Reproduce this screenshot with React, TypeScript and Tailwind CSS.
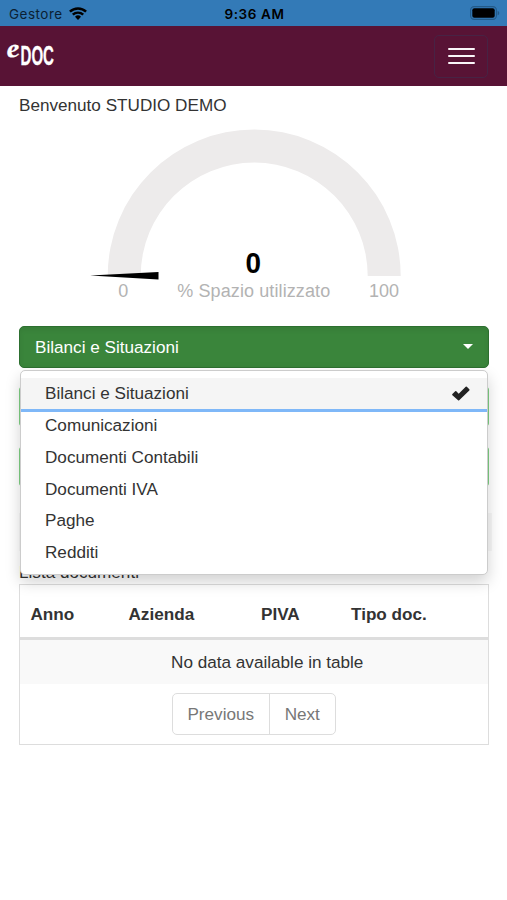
import { useState } from "react";

const categories = [
  "Bilanci e Situazioni",
  "Comunicazioni",
  "Documenti Contabili",
  "Documenti IVA",
  "Paghe",
  "Redditi",
];

function StatusBar() {
  return (
    <div className="grid h-[26px] grid-cols-3 items-center bg-[#337ab7] pt-[2px] pr-[7px] pl-[9px] font-[Inter,sans-serif] text-[13.5px] leading-6 text-[#0b1f33]">
      <div className="flex items-center gap-[6px]">
        <span className="tracking-[0.5px]">Gestore</span>
        <svg width="18" height="13" viewBox="0 0 18 13" fill="none" stroke="#000" className="-mt-[2px]">
          <path d="M.9 4.6a11.8 11.8 0 0 1 16.2 0" strokeWidth="2.5" />
          <path d="M3.8 7.7a7.5 7.5 0 0 1 10.4 0" strokeWidth="2.4" />
          <path d="M6 9.8a4.3 4.3 0 0 1 6 0L9 12.9z" fill="#000" stroke="none" />
        </svg>
      </div>
      <div className="text-center font-semibold tracking-[0.6px] text-black">9:36 AM</div>
      <div className="flex justify-end">
        <svg width="30" height="14" viewBox="0 0 30 14" className="-mt-[2px]">
          <rect x=".6" y=".6" width="25.8" height="12.8" rx="3.6" fill="none" stroke="#235a88" strokeWidth="1.1" />
          <rect x="2.3" y="2.3" width="22.4" height="9.4" rx="2" fill="#000" />
          <path d="M27.6 4.7c2.2.8 2.2 3.8 0 4.6z" fill="#235a88" />
        </svg>
      </div>
    </div>
  );
}

function Navbar() {
  return (
    <nav className="flex h-[60px] items-center justify-between bg-[#581335] pr-[19px]">
      <svg width="80" height="60" viewBox="0 0 80 60" fill="#fff" stroke="#fff">
        <text x="7.5" y="32" transform="rotate(-10 7.5 32)" fontFamily="Liberation Serif, serif" fontStyle="italic" fontWeight="700" fontSize="25" strokeWidth=".2" textLength="13.5" lengthAdjust="spacingAndGlyphs">
          e
        </text>
        <text x="20.5" y="38.5" fontFamily="Liberation Sans Narrow, Liberation Sans, sans-serif" fontWeight="700" fontSize="27" strokeWidth=".3" textLength="33.5" lengthAdjust="spacingAndGlyphs">
          DOC
        </text>
      </svg>
      <button type="button" className="flex h-[43px] w-[54px] flex-col items-center justify-center gap-[4.5px] rounded-[5px] border border-[#472344]">
        <span className="h-[2.6px] w-[27px] rounded-[1px] bg-[#fbf6f9]" />
        <span className="h-[2.6px] w-[27px] rounded-[1px] bg-[#fbf6f9]" />
        <span className="h-[2.6px] w-[27px] rounded-[1px] bg-[#fbf6f9]" />
      </button>
    </nav>
  );
}

function Gauge() {
  return (
    <svg width="469" height="190" viewBox="19 120 469 190" fontFamily="Liberation Sans, Arial, sans-serif" className="block">
      <path d="M107.7 276a146.5 146.5 0 0 1 293 0h-33a113.5 113.5 0 0 0-227 0z" fill="#edebeb" />
      <path d="M90 275.4 158.5 272v7.4z" fill="#000" />
      <text x="253.3" y="273" textAnchor="middle" fontSize="30" fontWeight="700" textLength="15.5" lengthAdjust="spacingAndGlyphs">
        0
      </text>
      <g fill="#b3b3b3" fontSize="18" textAnchor="middle">
        <text x="123.3" y="297">0</text>
        <text x="253.7" y="297" textLength="153">% Spazio utilizzato</text>
        <text x="384" y="297">100</text>
      </g>
    </svg>
  );
}

export default function App() {
  const [selected, setSelected] = useState(categories[0]);

  return (
    <div className="min-h-[900px] w-[507px] bg-white font-['Liberation_Sans',Arial,sans-serif] text-[17.14px] leading-[24px] text-[#333]">
      <StatusBar />
      <Navbar />
      <main className="px-[19px]">
        <p className="h-[34px] pt-[7px]">Benvenuto STUDIO DEMO</p>
        <Gauge />

        <div className="relative mt-[16px]">
          <button
            type="button"
            className="flex h-[41.5px] w-[469.5px] items-center justify-between rounded-[5px] border border-[#2d6f30] bg-[#3a853b] px-[15px] text-white shadow-[inset_0_3px_5px_rgba(0,0,0,0.06)]"
          >
            <span>{selected}</span>
            <svg width="10" height="5" viewBox="0 0 10 5">
              <path d="M0 0h10L5 5z" fill="#fff" />
            </svg>
          </button>

          <ul className="absolute top-[44px] left-px z-10 w-[468px] rounded-[5px] border border-[#ccc] bg-white pt-[6.5px] pb-[5.5px] shadow-[0_7px_15px_rgba(0,0,0,0.18)]">
            {categories.map((name) => (
              <li
                key={name}
                onClick={() => setSelected(name)}
                className={
                  name === selected
                    ? "flex h-[31.75px] items-center justify-between bg-[#f5f5f5] pr-[17px] pl-[24px] shadow-[0_3px_0_#7fb8f8]"
                    : "flex h-[31.75px] items-center pr-[17px] pl-[24px]"
                }
              >
                <span>{name}</span>
                {name === selected && (
                  <svg width="18" height="15" viewBox="0 0 18 15">
                    <path d="M.4 8.1 3.2 5.3q.6-.5 1.1 0L6.7 7.7 13.7.7q.6-.5 1.1 0l2.5 2.5q.5.6 0 1.2L7.2 14.3q-.6.5-1.1 0L.4 9.2q-.5-.5 0-1.1z" fill="#222" />
                  </svg>
                )}
              </li>
            ))}
          </ul>
        </div>

        <div className="mt-[19px] h-[39px] w-[470px] rounded-[3px] bg-[#7fd083]" />
        <div className="mt-[21px] h-[39px] w-[470px] rounded-[3px] bg-[#7fd083]" />
        <div className="mt-[27px] -mr-[4px] h-[38px] bg-[#f7f7f7]" />

        <p className="mt-[9.5px] h-[23.5px]">Lista documenti</p>

        <section className="h-[161px] w-[469.5px] border border-[#ddd]">
          <table className="w-full table-fixed border-collapse">
            <thead>
              <tr className="h-[54px] border-b-[3px] border-[#ddd] text-left">
                <th className="w-[98px] pt-[7px] pl-[10.5px]">Anno</th>
                <th className="w-[132px] pt-[7px] pl-[10.5px]">Azienda</th>
                <th className="w-[90px] pt-[7px] pl-[11px]">PIVA</th>
                <th className="pt-[7px] pl-[11px]">Tipo doc.</th>
              </tr>
            </thead>
            <tbody>
              <tr className="h-[45px] bg-[#f9f9f9]">
                <td colSpan={4} className="text-center">
                  <span className="pl-[27px]">No data available in table</span>
                </td>
              </tr>
            </tbody>
          </table>
          <div className="mt-[9.5px] flex justify-center text-[#777]">
            <div className="flex h-[42px] w-[164px] rounded-[5px] border border-[#ddd]">
              <button type="button" className="w-[97px] border-r border-[#ddd]">Previous</button>
              <button type="button" className="flex-1">Next</button>
            </div>
          </div>
        </section>
      </main>
    </div>
  );
}
